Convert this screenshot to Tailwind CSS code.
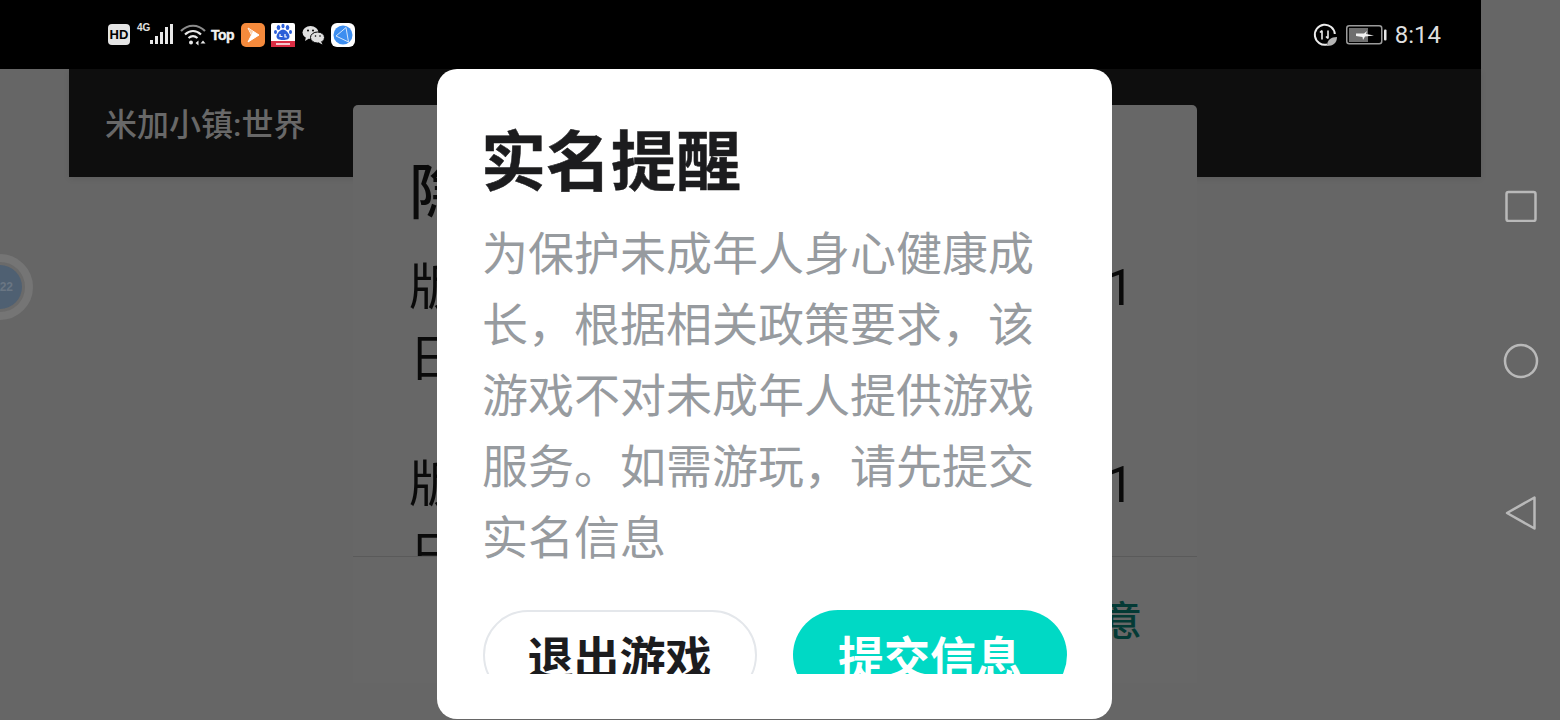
<!DOCTYPE html>
<html lang="zh">
<head>
    <meta charset="UTF-8">
    <title>米加小镇:世界</title>
    <script src="https://cdn.jsdelivr.net/npm/@tailwindcss/browser@4"></script>
</head>
<body class="bg-[#666666] overflow-hidden font-['Noto_Sans_CJK_SC','Noto_Sans',sans-serif]">
    <div class="relative flex w-[1560px] h-[720px] overflow-hidden">
        <!-- Main column -->
        <div class="w-[1481px] flex flex-col">
            <!-- Status bar -->
            <div class="h-[69px] bg-black flex items-center justify-between pl-[108px] pr-[40px]">
                <div class="flex items-center">
                    <div class="w-[22px] h-[21px] rounded-[4px] bg-[#e4e4e4] flex items-center justify-center text-black text-[13px] leading-none font-bold font-['Liberation_Sans',sans-serif]">HD</div>
                    <!-- signal -->
                    <div class="relative w-[36px] h-[24px] ml-[7px]">
                        <span class="absolute left-0 top-0 text-[10px] leading-[10px] font-bold text-[#e0e0e0] font-['Liberation_Sans',sans-serif]">4G</span>
                        <svg class="absolute left-[13px] top-0" width="24" height="24" viewBox="0 0 24 24" fill="#e8e8e8">
                            <rect x="0" y="17" width="3" height="4"/>
                            <rect x="5" y="13" width="3" height="8"/>
                            <rect x="10" y="9" width="3" height="12"/>
                            <rect x="15" y="4" width="3" height="17"/>
                            <rect x="20" y="1" width="3" height="20"/>
                        </svg>
                    </div>
                    <!-- wifi -->
                    <svg class="ml-[7px]" width="26" height="24" viewBox="0 0 26 24" fill="none" stroke="#e8e8e8" stroke-width="2.200">
                        <path d="M1 8c7-7 17-7 24 0" stroke="#8c8c8c"/>
                        <path d="M5 11.500c5-4.500 11-4.500 16 0"/>
                        <path d="M8.500 15c3-2.500 6-2.500 9 0"/>
                        <circle cx="11" cy="19.500" r="2" fill="#e8e8e8" stroke="none"/>
                        <path d="M15.500 20l3-2.500v5zM23 17.500l2.500 3h-5z" stroke="none" fill="#e8e8e8"/>
                    </svg>
                    <span class="ml-[5px] w-[25px] text-[14px] leading-none font-bold text-[#f2f2f2] font-['Liberation_Sans',sans-serif] tracking-[-0.5px] [-webkit-text-stroke:0.4px_#f2f2f2]">Top</span>
                    <!-- orange app -->
                    <svg class="ml-[5px]" width="24" height="24" viewBox="0 0 24 24">
                        <rect width="24" height="24" rx="5" fill="#f58a3c"/>
                        <path d="M7 5l11 7-11 7 3.500-7z" fill="#fff" stroke="#fff" stroke-linejoin="round"/>
                        <path d="M7 5l5 3.200-1.500 3.800z" fill="#fbd3b0"/>
                    </svg>
                    <!-- paw app -->
                    <svg class="ml-[6px]" width="24" height="24" viewBox="0 0 24 24">
                        <rect width="24" height="24" rx="2" fill="#fff"/>
                        <rect y="18" width="24" height="6" fill="#dc2d44"/>
                        <g fill="#2d5fd8">
                            <ellipse cx="7.500" cy="4.500" rx="1.800" ry="2.500"/>
                            <ellipse cx="12" cy="3" rx="1.600" ry="2.200"/>
                            <ellipse cx="16.500" cy="4.500" rx="1.800" ry="2.500"/>
                            <ellipse cx="4.500" cy="9" rx="1.500" ry="2"/>
                            <ellipse cx="19.500" cy="9" rx="1.500" ry="2"/>
                            <path d="M12 6.500c3 0 6.500 4.500 6.500 7s-2.500 3.500-6.500 3.500-6.500-1-6.500-3.500 3.500-7 6.500-7z"/>
                        </g>
                        <path d="M9 11v2.500h2.500M14 11v3h2" stroke="#fff" stroke-width="1.200" fill="none"/>
                        <rect x="5" y="20" width="14" height="2" fill="#f6c6cc"/>
                    </svg>
                    <!-- chat app -->
                    <svg class="ml-[7px]" width="23" height="20" viewBox="0 0 23 20" fill="#e0e0e0">
                        <ellipse cx="8.500" cy="7.500" rx="8" ry="6.500"/>
                        <path d="M4 12l-1 4 4-2.500z"/>
                        <ellipse cx="15.500" cy="12.500" rx="7" ry="5.500" stroke="#000" stroke-width="1"/>
                        <path d="M19 16.500l1.500 3-4-2z"/>
                        <circle cx="6" cy="5.500" r="1" fill="#000"/>
                        <circle cx="11" cy="5.500" r="1" fill="#000"/>
                        <circle cx="13.500" cy="11" r=".8" fill="#000"/>
                        <circle cx="18" cy="11" r=".8" fill="#000"/>
                    </svg>
                    <!-- blue app -->
                    <svg class="ml-[6px]" width="24" height="24" viewBox="0 0 24 24">
                        <rect width="24" height="24" rx="6" fill="#fff"/>
                        <circle cx="12" cy="12" r="9.500" fill="#3d8ef0"/>
                        <path d="M5 13L15 4.500M5 13l12.500 6M15 4.500l2.500 14.500" stroke="#d5e6fb" stroke-width="1" fill="none"/>
                    </svg>
                </div>
                <div class="flex items-center">
                    <!-- data saver -->
                    <svg width="24" height="24" viewBox="0 0 24 24" fill="none" stroke="#ececec" stroke-width="2">
                        <path d="M14 21.500A10 10 0 1 1 21.800 11"/>
                        <path d="M9 7.500v9M7 9.500l2-2M15 7.500v8M13 13.500l2 2" stroke-width="1.600"/>
                        <path d="M14 23c0-6 4-9 10-9 0 6-4 9-10 9z" fill="#b4b4b4" stroke="none"/>
                    </svg>
                    <!-- battery -->
                    <div class="ml-[9px] flex items-center">
                        <svg width="41" height="20" viewBox="0 0 41 20">
                            <rect x=".75" y=".75" width="35" height="18" rx="2.500" fill="none" stroke="#9b9b9b" stroke-width="1.500"/>
                            <rect x="3" y="3" width="19" height="14" fill="#6e6e6e"/>
                            <path d="M10 8.500h8L21 6l-1 3 8 1.500-9 1L17 15l-.5-3L10 11z" fill="#f2f2f2"/>
                            <rect x="38" y="4.500" width="2.500" height="11" rx="1" fill="#e8e8e8"/>
                        </svg>
                    </div>
                    <span class="ml-[8px] mt-[1px] text-[24px] leading-none text-[#dedede] font-['Roboto',sans-serif]">8:14</span>
                </div>
            </div>
            <!-- Title bar -->
            <div class="ml-[69px] h-[108px] bg-[#0e0e0e] flex items-center pl-[36px] pt-[4px] shadow-[0_2px_6px_rgba(0,0,0,0.08)]">
                <span class="text-[32px] leading-none font-medium text-[#686868] font-['Roboto','Noto_Sans_CJK_SC',sans-serif]">米加小镇:世界</span>
            </div>
        </div>

        <!-- Navigation bar -->
        <div class="w-[79px] flex flex-col items-center">
            <svg class="mt-[190px]" width="32" height="32" viewBox="0 0 32 32" fill="none" stroke="#b9b9b9" stroke-width="2.500">
                <rect x="1.500" y="2" width="29" height="29" rx="2"/>
            </svg>
            <svg class="mt-[121px]" width="36" height="36" viewBox="0 0 36 36" fill="none" stroke="#b9b9b9" stroke-width="2.500">
                <circle cx="18" cy="18" r="16"/>
            </svg>
            <svg class="mt-[116px]" width="32" height="36" viewBox="0 0 32 36" fill="none" stroke="#b9b9b9" stroke-width="2.500" stroke-linejoin="round">
                <path d="M2 18L29.500 2.500v31z"/>
            </svg>
        </div>

        <!-- Floating ball -->
        <div class="absolute left-[-33px] top-[254px] w-[66px] h-[66px] rounded-full border-[8px] border-[#757575] bg-[#6a6a6a] flex items-center justify-center">
            <div class="w-[44px] h-[44px] rounded-full bg-[#4f6072] flex items-center justify-end pr-[9px]">
                <span class="text-[12px] leading-none font-bold text-[#6a7683] font-['Liberation_Sans',sans-serif]">22</span>
            </div>
        </div>

        <!-- Underlying dialog -->
        <div class="absolute left-[353px] top-[105px] w-[844px] h-[578px] bg-[#676767] rounded-t-[5px] flex flex-col text-[#0a0a0a] font-['Roboto','Noto_Sans_CJK_SC',sans-serif]">
            <div class="h-[452px] overflow-hidden border-b border-[#5a5a5a] pl-[56px] pr-[56px] pt-[53px] shrink-0">
                <div class="text-[60px] leading-[72px] font-medium">隐私政策</div>
                <p class="mt-[23px] text-[50px] leading-[71px]">版本更新日期为：2021年11月11日</p>
                <p class="mt-[55px] text-[50px] leading-[71px]">版本更新日期为：2021年11月11日</p>
            </div>
            <div class="flex-1 flex items-center justify-end pr-[55px] pt-[3px]">
                <span class="text-[40px] leading-none font-medium text-[#043a35]">同意</span>
            </div>
        </div>

        <!-- Real name modal -->
        <div class="absolute left-[437px] top-[69px] w-[675px] h-[650px] bg-white rounded-[20px]">
            <div class="h-[605px] overflow-hidden pl-[46px] pr-[45px] pt-[48px]">
                <h1 class="-ml-[2px] text-[65px] leading-[80px] font-bold text-[#1c1c1e] [-webkit-text-stroke:0.5px_#1c1c1e]">实名提醒</h1>
                <p class="-ml-[1px] mt-[18px] text-[46px] leading-[71px] text-[#979b9f]">为保护未成年人身心健康成长，根据相关政策要求，该游戏不对未成年人提供游戏服务。如需游玩，请先提交实名信息</p>
                <div class="mt-[40px] flex justify-between">
                    <button class="w-[274px] h-[90px] rounded-full border-2 border-[#e4e7eb] bg-white pr-[1px] text-[46px] font-bold text-[#1c1c1e]">退出游戏</button>
                    <button class="w-[274px] h-[90px] rounded-full bg-[#00d9c5] text-[46px] font-bold text-white">提交信息</button>
                </div>
            </div>
        </div>
    </div>
</body>
</html>
